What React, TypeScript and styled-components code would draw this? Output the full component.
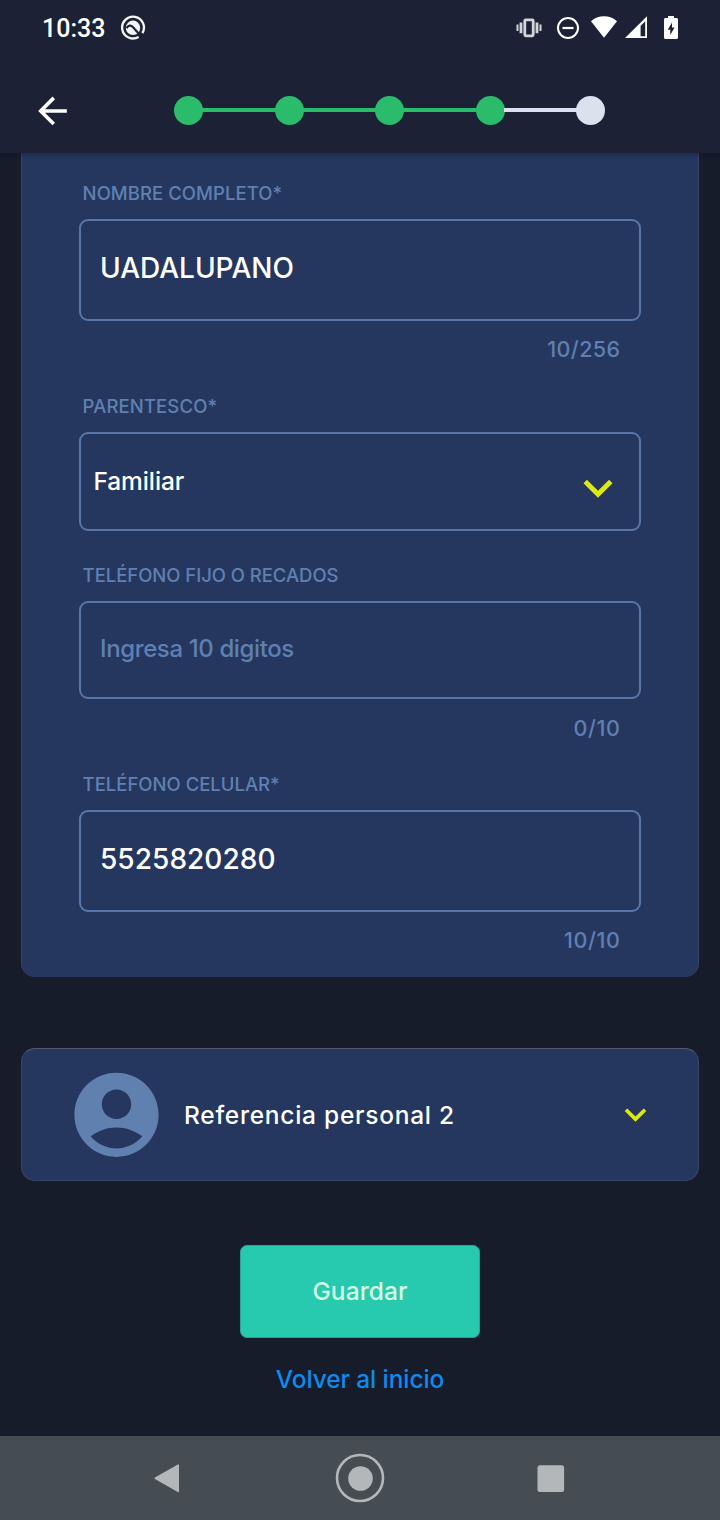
import React from "react";
import styled, { createGlobalStyle } from "styled-components";

const color = {
  page: "#171c2b",
  header: "#1c2135",
  card: "#26375f",
  line: "#5777aa",
  muted: "#5f80b2",
  green: "#2bbc6b",
  pending: "#dce1f0",
  lime: "#dcea12",
  teal: "#27c9af",
  link: "#0d8bf0",
  nav: "#454d52",
  navIcon: "#b3b7b9",
};

const GlobalStyle = createGlobalStyle`
  * { box-sizing: border-box; }
  body { margin: 0; background: ${color.page}; }
  svg { display: block; flex: none; }
`;

const Screen = styled.div`
  display: flex;
  flex-direction: column;
  width: 720px;
  height: 1520px;
  overflow: hidden;
  background: ${color.page};
  font-family: Inter, "Liberation Sans", sans-serif;
  font-weight: 500;
`;

const Header = styled.header`
  flex: none;
  height: 153px;
  background: ${color.header};
  box-shadow: 0 1px 5px rgba(8, 12, 24, 0.4);
  z-index: 1;
`;

const StatusBar = styled.div`
  display: flex;
  align-items: center;
  height: 56px;
  padding: 0 40px 0 42px;
`;

const Clock = styled.span`
  width: 78px;
  padding-top: 2px;
  font: 500 25px/30px Roboto, sans-serif;
  color: #fff;
`;

const StatusIcons = styled.div`
  display: flex;
  align-items: center;
  margin-left: auto;
`;

const VibrateIcon = styled.svg`
  margin-right: 14px;
`;

const DisturbIcon = styled.svg`
  margin-right: 11px;
`;

const WifiIcon = styled.svg`
  margin-right: 8px;
`;

const SignalIcon = styled.svg`
  margin-right: 17px;
`;

const BatteryIcon = styled.svg`
  margin-right: 2px;
`;

const AppBar = styled.div`
  display: flex;
  align-items: center;
  height: 97px;
  padding: 12px 0 0 31px;
`;

const BackButton = styled.div`
  width: 143px;
`;

const Stepper = styled.div`
  display: flex;
  align-items: center;
  margin-top: -1px;
`;

const Dot = styled.i<{ $done: boolean }>`
  width: 29px;
  height: 29px;
  border-radius: 50%;
  background: ${(p) => (p.$done ? color.green : color.pending)};
`;

const Link = styled.i<{ $done: boolean }>`
  width: 73.5px;
  height: 4px;
  margin: 0 -1px;
  background: ${(p) => (p.$done ? color.green : color.pending)};
`;

const Content = styled.main`
  display: flex;
  flex-direction: column;
  flex: 1;
  padding: 0 21px;
`;

const FormCard = styled.section`
  display: flex;
  flex-direction: column;
  height: 824px;
  padding: 28px 57px 0;
  background: ${color.card};
  border: 1px solid #35466b;
  border-width: 0 1px;
  border-radius: 0 0 14px 14px;
`;

const Group = styled.div<{ $after: number }>`
  display: flex;
  flex-direction: column;
  margin-bottom: ${(p) => p.$after}px;
`;

const Label = styled.span<{ $track: number }>`
  height: 24px;
  margin: 0 0 14px 3.6px;
  font-size: 18.5px;
  line-height: 24px;
  white-space: nowrap;
  letter-spacing: ${(p) => p.$track}px;
  color: ${color.muted};
`;

const Field = styled.div<{ $height: number; $inset?: number; $raise?: number }>`
  display: flex;
  align-items: center;
  height: ${(p) => p.$height}px;
  padding: 0 12px ${(p) => p.$raise ?? 4}px ${(p) => p.$inset ?? 19}px;
  border: 2px solid ${color.line};
  border-radius: 9px;
`;

const Value = styled.span<{ $size: number; $track: number; $muted?: boolean }>`
  font-size: ${(p) => p.$size}px;
  line-height: 34px;
  white-space: nowrap;
  letter-spacing: ${(p) => p.$track}px;
  color: ${(p) => (p.$muted ? color.muted : "#fff")};
`;

const Counter = styled.span<{ $gap?: number; $track?: number }>`
  align-self: flex-end;
  height: 28px;
  margin: ${(p) => p.$gap ?? 14}px 20.5px 0 0;
  font-size: 21.5px;
  line-height: 28px;
  letter-spacing: ${(p) => p.$track ?? 0.6}px;
  color: ${color.muted};
`;

const SelectArrow = styled.div`
  margin: 13px 0 0 auto;
`;

const ReferenceCard = styled.section`
  display: flex;
  align-items: center;
  height: 133px;
  margin-top: 71px;
  padding: 0 41px 0 44px;
  background: ${color.card};
  border: 1px solid #35466b;
  border-top-color: #535a6b;
  border-radius: 14px;
`;

const ReferenceTitle = styled.span`
  margin-left: 17px;
  font-size: 24.5px;
  line-height: 32px;
  letter-spacing: 0.74px;
  color: #fff;
`;

const ReferenceArrow = styled.div`
  margin-left: auto;
`;

const SaveButton = styled.div`
  display: flex;
  align-items: center;
  justify-content: center;
  align-self: center;
  width: 240px;
  height: 93px;
  margin-top: 64px;
  padding-bottom: 2px;
  border: 1px solid #22a895;
  border-radius: 7px;
  background: ${color.teal};
  color: #d2fbe0;
  font-size: 24.5px;
  letter-spacing: 0.1px;
`;

const HomeLink = styled.a`
  align-self: center;
  margin-top: 26px;
  font-size: 24.5px;
  line-height: 30px;
  letter-spacing: -0.1px;
  color: ${color.link};
`;

const NavBar = styled.nav`
  display: grid;
  flex: none;
  grid-template-columns: 182px 202px 1fr;
  align-items: center;
  height: 84px;
  padding-left: 152px;
  background: ${color.nav};
`;

const Chevron = ({ size }: { size: number }) => (
  <svg width={size} height={size} viewBox="0 0 24 24">
    <path fill={color.lime} d="M16.59 8.59 12 13.17 7.41 8.59 6 10l6 6 6-6z" />
  </svg>
);

const steps = [true, true, true, true, false];

export default function App() {
  return (
    <Screen>
      <GlobalStyle />
      <Header>
        <StatusBar>
          <Clock>10:33</Clock>
          <svg width="26" height="26" viewBox="0 0 26 26">
            <path d="M18.6 21.9A10.9 10.9 0 1 1 22.4 18.1" fill="none" stroke="#f4f4f6" strokeWidth="2.3" />
            <circle cx="13" cy="12.8" r="7.2" fill="#f4f4f6" />
            <path d="M6.5 13.2c2-3.2 4.400-3.200 6.100-1.400l8.500 9.400" fill="none" stroke={color.header} strokeWidth="2.2" />
          </svg>
          <StatusIcons>
            <VibrateIcon width="26" height="22" viewBox="0 0 26 22" fill="none" stroke="#d4d5db">
              <rect x="8.800" y="2.800" width="8.400" height="16" rx="1" strokeWidth="2.800" />
              <path d="M1.500 7.500v6.600M24.500 7.500v6.600" strokeWidth="2" />
              <path d="M5 5.400v10.800M21 5.400v10.800" strokeWidth="2.800" />
            </VibrateIcon>
            <DisturbIcon width="24" height="24" viewBox="0 0 24 24" fill="none" stroke="#fff">
              <circle cx="12" cy="12" r="10" strokeWidth="2" />
              <path d="M6.500 12h11" strokeWidth="2.2" />
            </DisturbIcon>
            <WifiIcon width="26" height="24" viewBox="0 0 26 24">
              <path d="M13 21.700 0 5.300C3.500 1.900 8 .3 13 .3s9.500 1.600 13 5z" fill="#fff" />
            </WifiIcon>
            <SignalIcon width="22" height="24" viewBox="0 0 22 24">
              <path fillRule="evenodd" d="M22 .3V22H0zM20.200 5.300 15.600 9.900v10.300h4.600z" fill="#fff" />
            </SignalIcon>
            <BatteryIcon width="14" height="24" viewBox="0 0 14 24">
              <path
                fillRule="evenodd"
                d="M4 0h6v2h2.500C13.400 2 14 2.600 14 3.500v18c0 .9-.6 1.500-1.500 1.500h-11C.6 23 0 22.400 0 21.500v-18C0 2.600.6 2 1.500 2H4zM8 6.500 3.800 13.800h2.500v5.200l4.200-7.500H8z"
                fill="#fff"
              />
            </BatteryIcon>
          </StatusIcons>
        </StatusBar>
        <AppBar>
          <BackButton>
            <svg width="43" height="43" viewBox="0 -0.25 24 24">
              <path fill="#fff" d="M20 11H7.830l5.590-5.590L12 4l-8 8 8 8 1.410-1.410L7.830 13H20v-2z" />
            </svg>
          </BackButton>
          <Stepper>
            {steps.map((done, i) => (
              <React.Fragment key={i}>
                {i > 0 && <Link $done={done} />}
                <Dot $done={done} />
              </React.Fragment>
            ))}
          </Stepper>
        </AppBar>
      </Header>

      <Content>
        <FormCard>
          <Group $after={31}>
            <Label $track={0.05}>NOMBRE COMPLETO*</Label>
            <Field $height={102}>
              <Value $size={28} $track={0}>UADALUPANO</Value>
            </Field>
            <Counter $track={0.4}>10/256</Counter>
          </Group>
          <Group $after={32}>
            <Label $track={0.12}>PARENTESCO*</Label>
            <Field $height={99} $inset={12.5} $raise={1}>
              <Value $size={24.5} $track={-0.1}>Familiar</Value>
              <SelectArrow>
                <Chevron size={58} />
              </SelectArrow>
            </Field>
          </Group>
          <Group $after={30}>
            <Label $track={-0.04}>TELÉFONO FIJO O RECADOS</Label>
            <Field $height={98} $raise={2}>
              <Value $size={24} $track={-0.38} $muted>Ingresa 10 digitos</Value>
            </Field>
            <Counter $gap={15}>0/10</Counter>
          </Group>
          <Group $after={0}>
            <Label $track={0}>TELÉFONO CELULAR*</Label>
            <Field $height={102}>
              <Value $size={28} $track={0.05}>5525820280</Value>
            </Field>
            <Counter>10/10</Counter>
          </Group>
        </FormCard>

        <ReferenceCard>
          <svg width="101" height="101" viewBox="0 -0.07 24 24">
            <path
              fill="#6080b0"
              d="M12 2C6.480 2 2 6.480 2 12s4.480 10 10 10 10-4.480 10-10S17.520 2 12 2zm0 4c1.930 0 3.500 1.570 3.500 3.500S13.930 13 12 13s-3.500-1.570-3.500-3.500S10.070 6 12 6zm0 14c-2.030 0-4.430-.82-6.140-2.880C7.550 15.800 9.680 15 12 15s4.450.8 6.140 2.120C16.430 19.180 14.030 20 12 20z"
            />
          </svg>
          <ReferenceTitle>Referencia personal 2</ReferenceTitle>
          <ReferenceArrow>
            <Chevron size={43} />
          </ReferenceArrow>
        </ReferenceCard>

        <SaveButton>Guardar</SaveButton>
        <HomeLink>Volver al inicio</HomeLink>
      </Content>

      <NavBar>
        <svg width="28" height="32" viewBox="0 0 28 32">
          <path d="M3.300 16.300 26.200 3.200v26.200z" fill={color.navIcon} stroke={color.navIcon} strokeWidth="1.600" strokeLinejoin="round" />
        </svg>
        <svg width="52" height="50" viewBox="0 0 52 50">
          <circle cx="26" cy="25" r="23" fill="none" stroke={color.navIcon} strokeWidth="2.600" />
          <circle cx="26.500" cy="25.500" r="12.300" fill={color.navIcon} />
        </svg>
        <svg width="30" height="30" viewBox="0 0 30 30">
          <rect x="1.500" y="2.300" width="26.600" height="26.600" rx="2.500" fill={color.navIcon} />
        </svg>
      </NavBar>
    </Screen>
  );
}
